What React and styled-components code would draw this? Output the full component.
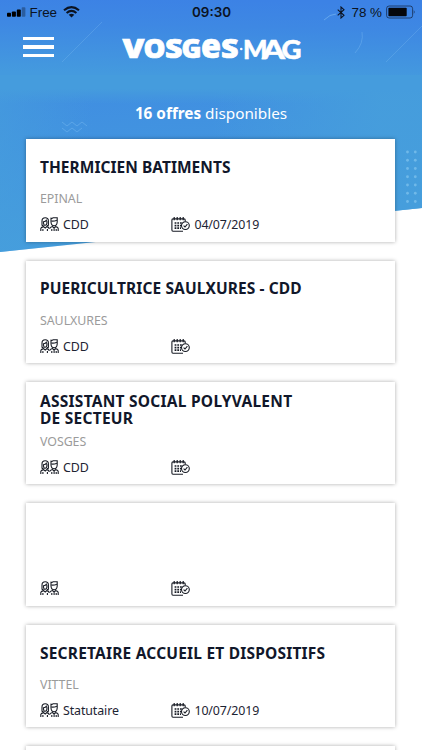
import styled, { createGlobalStyle } from 'styled-components';

const GlobalStyle = createGlobalStyle`
  * {
    box-sizing: border-box;
  }

  body {
    margin: 0;
    background-color: #fff;
    color: #11172a;
    font-family: 'Noto Sans', 'Open Sans', sans-serif;
  }
`;

const StyledRoot = styled.div`
  position: relative;
  height: 100vh;
  overflow: hidden;
`;

const Backdrop = styled.svg`
  position: absolute;
  top: 0;
  left: 0;
`;

const StatusBar = styled.div`
  position: relative;
  display: grid;
  grid-template-columns: 1fr auto 1fr;
  align-items: center;
  height: 24px;
  padding: 0 6px 0 7px;
  color: #0b1322;
  font-family: 'Liberation Sans', Inter, sans-serif;
  font-size: 13.4px;
`;

const StatusGroup = styled.div`
  display: flex;
  align-items: center;
  justify-content: ${(props) => (props.$end ? 'flex-end' : 'flex-start')};
`;

const Carrier = styled.span`
  margin: 0 6px 0 3.5px;
`;

const Clock = styled.span`
  font-family: Inter, 'Liberation Sans', sans-serif;
  font-size: 13.4px;
  font-weight: 600;
`;

const BatteryLevel = styled.span`
  margin: 0 4px 0 6px;
`;

const Header = styled.header`
  position: relative;
  display: flex;
  align-items: center;
  height: 46px;
  padding-left: 23px;
`;

const MenuBtn = styled.button`
  display: flex;
  flex-direction: column;
  justify-content: space-between;
  width: 31px;
  height: 21px;
  margin-right: 66px;
  padding: 0;
  border: none;
  background-color: transparent;
`;

const MenuLine = styled.span`
  width: 100%;
  height: 3.4px;
  background-color: #fff;
`;

const LogoDrawing = styled.svg`
  overflow: visible;
`;

const Summary = styled.p`
  position: relative;
  height: 69.2px;
  margin: 0;
  padding-top: 33px;
  color: #fff;
  font-size: 15.3px;
  line-height: 20px;
  text-align: center;
`;

const Count = styled.strong`
  font-weight: 700;
`;

const OfferList = styled.ul`
  position: relative;
  display: flex;
  flex-direction: column;
  gap: 19px;
  margin: 0;
  padding: 0 27px 0 26px;
  list-style: none;
`;

const OfferCard = styled.li`
  height: 102.4px;
  padding: 11px 14px 0;
  background-color: #fff;
  box-shadow: 0 0 4px rgba(0, 0, 0, 0.33);
`;

const TitleContainer = styled.div`
  display: flex;
  align-items: center;
  height: 35px;
`;

const OfferTitle = styled.h2`
  margin: 0;
  font-size: 15.5px;
  font-weight: 700;
  line-height: 17.5px;
  letter-spacing: ${(props) => props.$tracking}px;
  white-space: pre;
`;

const City = styled.div`
  height: 26px;
  color: #9b9b9b;
  font-size: 12.4px;
  line-height: 27px;
  letter-spacing: -0.05px;
`;

const Details = styled.div`
  display: grid;
  grid-template-columns: 131.4px 1fr;
  height: 27px;
`;

const Detail = styled.div`
  display: flex;
  align-items: center;
  gap: 4px;
  color: #1d2433;
  font-size: 12.4px;
  letter-spacing: -0.1px;
`;

const offers = [
  { id: 1, title: 'THERMICIEN BATIMENTS', tracking: 0.03, city: 'EPINAL', contract: 'CDD', date: '04/07/2019' },
  { id: 2, title: 'PUERICULTRICE SAULXURES - CDD', tracking: 0.1, city: 'SAULXURES', contract: 'CDD', date: '' },
  { id: 3, title: 'ASSISTANT SOCIAL POLYVALENT\nDE SECTEUR', tracking: 0.25, city: 'VOSGES', contract: 'CDD', date: '' },
  { id: 4, title: '', tracking: 0, city: '', contract: '', date: '' },
  { id: 5, title: 'SECRETAIRE ACCUEIL ET DISPOSITIFS', tracking: 0.2, city: 'VITTEL', contract: 'Statutaire', date: '10/07/2019' },
  { id: 6, title: '', tracking: 0, city: '', contract: '', date: '' },
];

const dotRows = [0, 1, 2, 3, 4, 5, 6];

const HeroBackdrop = () => (
  <Backdrop width="422" height="256" viewBox="0 0 422 256">
    <defs>
      <linearGradient id="bar" x1="0.55" y1="0" x2="0.45" y2="1">
        <stop offset="0" stopColor="#3c82e5" />
        <stop offset="0.35" stopColor="#3e88e3" />
        <stop offset="1" stopColor="#449ade" />
      </linearGradient>
      <linearGradient id="hero" x1="0.2" y1="0" x2="0.4" y2="1">
        <stop offset="0" stopColor="#3f8ce2" />
        <stop offset="1" stopColor="#469fdc" />
      </linearGradient>
      <linearGradient id="fade" x1="0" y1="0" x2="1" y2="0">
        <stop offset="0" stopColor="#469edc" stopOpacity="0.6" />
        <stop offset="0.22" stopColor="#469edc" stopOpacity="0" />
        <stop offset="0.5" stopColor="#469edc" stopOpacity="0" />
        <stop offset="0.9" stopColor="#469edc" stopOpacity="0.9" />
      </linearGradient>
      <linearGradient id="seam" x1="0" y1="0" x2="0" y2="1">
        <stop offset="0" stopColor="#459cdd" />
        <stop offset="0.55" stopColor="#459cdd" />
        <stop offset="1" stopColor="#459cdd" stopOpacity="0" />
      </linearGradient>
    </defs>
    <path d="M0 70H422V208L0 252Z" fill="url(#hero)" />
    <path d="M0 70H422V208L0 252Z" fill="url(#fade)" />
    <rect y="70" width="422" height="34" fill="url(#seam)" />
    <rect width="422" height="75" fill="url(#bar)" />
    <g fill="none" stroke="#8cc8f5">
      <path d="M62 62L102 22" opacity="0.25" />
      <path d="M386 62L422 26" opacity="0.25" />
      <path d="M324 20Q330 14 336 14" opacity="0.5" />
      <path d="M362 32Q364 43 355 53" opacity="0.3" />
      <path d="M62 122l5 4 5-4 5 4 5-4 5 4M62 128l5 4 5-4 5 4 5-4" opacity="0.35" />
    </g>
    <g fill="#7fc3ee" opacity="0.75">
      {dotRows.map((row) => (
        <g key={row}>
          <circle cx="407.5" cy={152 + row * 8.25} r="1.4" />
          <circle cx="415.3" cy={152 + row * 8.25} r="1.4" />
        </g>
      ))}
    </g>
  </Backdrop>
);

const SignalIcon = () => (
  <svg width="19" height="10" viewBox="0 0 19 10">
    <rect x="0" y="5.8" width="4" height="4" rx="0.8" />
    <rect x="4.9" y="4.5" width="4" height="5.3" rx="0.8" />
    <rect x="9.8" y="2.6" width="4" height="7.2" rx="0.8" />
    <rect x="14.7" y="0.3" width="3.7" height="9.5" rx="0.8" opacity="0.3" />
  </svg>
);

const WifiIcon = () => (
  <svg width="17" height="12" viewBox="0 0 17 12" fill="none" stroke="#0b1322" strokeWidth="2.1">
    <path d="M1 4.3Q8.5 -2.1 16 4.3" />
    <path d="M3.6 7Q8.5 2.7 13.4 7" />
    <path d="M8.5 11.5L5.7 8.8Q8.5 6.7 11.3 8.8Z" fill="#0b1322" stroke="none" />
  </svg>
);

const BluetoothIcon = () => (
  <svg width="8" height="13" viewBox="0 0 8 13" fill="none" stroke="#0b1322" strokeWidth="1.1">
    <path d="M0.7 3.6L7 9.3L4 12V1L7 3.7L0.7 9.4" />
  </svg>
);

const BatteryIcon = () => (
  <svg width="30" height="14" viewBox="0 0 30 14">
    <rect x="0.6" y="1" width="26" height="12" rx="2.5" fill="none" stroke="#0b1322" strokeWidth="1" opacity="0.6" />
    <rect x="2.4" y="2.8" width="18.3" height="8.4" rx="0.8" fill="#05070c" />
    <path d="M27.8 5Q29.6 7 27.8 9Z" opacity="0.6" />
  </svg>
);

const logoLetters = [
  { char: 'V', x: 2.5, width: 22, size: 27 },
  { char: 'O', x: 23.5, width: 22, size: 27 },
  { char: 'S', x: 45, width: 17.5, size: 27 },
  { char: 'G', x: 61.5, width: 20, size: 27 },
  { char: 'e', x: 81, width: 20, size: 34 },
  { char: 'S', x: 101, width: 17.5, size: 27 },
];

const Logo = () => (
  <LogoDrawing width="184" height="40" viewBox="0 0 184 40" fill="#fff">
    <g fontFamily="'Noto Sans', 'Open Sans', sans-serif" fontWeight="900" stroke="#fff" strokeWidth="0.7">
      {logoLetters.map(({ char, x, width, size }) => (
        <text key={x} x={x} y="31.3" fontSize={size} textLength={width} lengthAdjust="spacingAndGlyphs">
          {char}
        </text>
      ))}
    </g>
    <circle cx="121.3" cy="22" r="1.3" />
    <g fontFamily="Lato, 'Open Sans', sans-serif" fontWeight="900" fontSize="27" stroke="#fff" strokeWidth="0.5">
      <text x="123" y="31.7" textLength="24.5" lengthAdjust="spacingAndGlyphs">M</text>
      <text x="142" y="31.7" textLength="23" lengthAdjust="spacingAndGlyphs">A</text>
      <text x="161.5" y="31.7" textLength="20" lengthAdjust="spacingAndGlyphs">G</text>
    </g>
  </LogoDrawing>
);

const PeopleIcon = () => (
  <svg width="19" height="15" viewBox="0 0 19 15" fill="none" stroke="#171b24" strokeWidth="1.1">
    <path d="M1.8 8.6H3.6M6.8 8.6H8.6M2 8.6V4Q2 0.8 5.2 0.8T8.4 4V8.6" />
    <path d="M3.5 4.8Q5.8 4.6 6.3 3.3L7 4.8Q7 8.3 5.2 8.3T3.5 4.8Z" />
    <path d="M0.8 14V11.6Q0.8 10.4 3.6 9.6L5.2 11L6.8 9.6Q9.2 10.2 9.3 12M2.9 12V14M7.4 12V14" />
    <path d="M11 5V1.2Q12.2 1.6 13 0.8H17.2V5Q17 8.7 14.1 8.7T11 5Z" />
    <path d="M11.3 4Q14 4.4 16.9 3.2" />
    <path d="M10 11.2Q10.6 10.2 12.5 9.6L14.1 11L15.7 9.6Q18.2 10.2 18.2 11.6V14M11.8 12V14M16.2 12V14M14.1 11V14" />
  </svg>
);

const CalendarIcon = () => (
  <svg width="19" height="15" viewBox="0 0 19 15" fill="none" stroke="#171b24" strokeWidth="1.1">
    <path d="M12 14.2H2Q0.9 14.2 0.9 13V3Q0.9 1.9 2 1.9H13Q14.2 1.9 14.2 3V4.5" />
    <path d="M3.2 0V3.3M6.2 0V3.3M9.2 0V3.3M12.2 0V3.3" strokeWidth="1.2" />
    <path d="M3.6 6H11.2M3.6 8.6H10M3.6 11.2H10" strokeWidth="1.7" strokeDasharray="1.8 0.9" />
    <circle cx="14.4" cy="8.6" r="3.9" fill="#fff" />
    <path d="M12.6 8.7L14 10L16.4 7.2" />
  </svg>
);

const App = () => {
  return (
    <StyledRoot>
      <GlobalStyle />
      <HeroBackdrop />
      <StatusBar>
        <StatusGroup>
          <SignalIcon />
          <Carrier>Free</Carrier>
          <WifiIcon />
        </StatusGroup>
        <Clock>09:30</Clock>
        <StatusGroup $end>
          <BluetoothIcon />
          <BatteryLevel>78 %</BatteryLevel>
          <BatteryIcon />
        </StatusGroup>
      </StatusBar>
      <Header>
        <MenuBtn aria-label="Menu">
          <MenuLine />
          <MenuLine />
          <MenuLine />
        </MenuBtn>
        <Logo />
      </Header>
      <Summary>
        <Count>16 offres</Count> disponibles
      </Summary>
      <OfferList>
        {offers.map((offer) => (
          <OfferCard key={offer.id}>
            <TitleContainer>
              <OfferTitle $tracking={offer.tracking}>{offer.title}</OfferTitle>
            </TitleContainer>
            <City>{offer.city}</City>
            <Details>
              <Detail>
                <PeopleIcon />
                {offer.contract}
              </Detail>
              <Detail>
                <CalendarIcon />
                {offer.date}
              </Detail>
            </Details>
          </OfferCard>
        ))}
      </OfferList>
    </StyledRoot>
  );
};

export default App;
